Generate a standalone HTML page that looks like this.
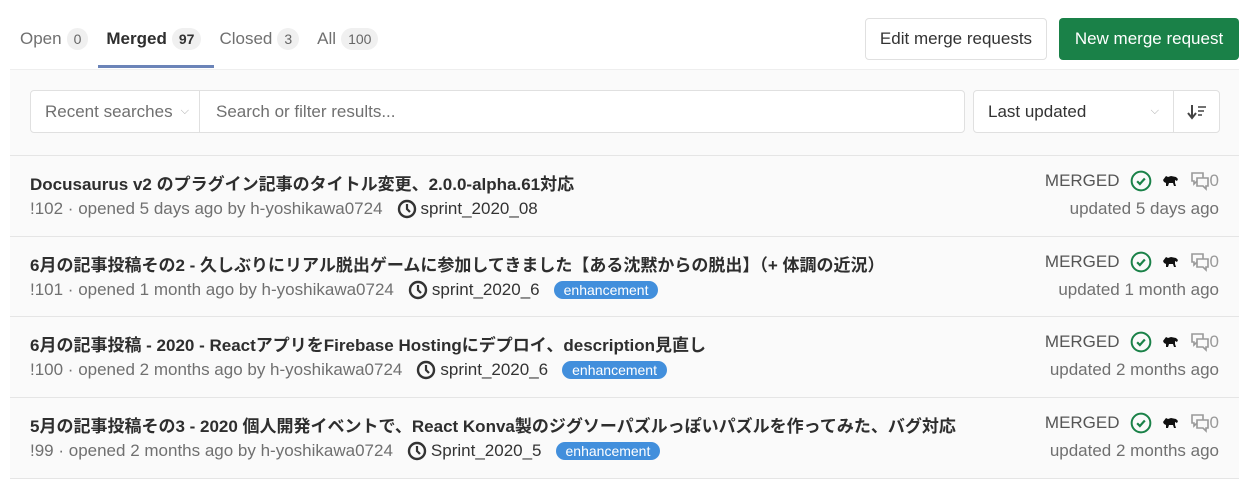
<!DOCTYPE html>
<html><head><meta charset="utf-8"><style>
*{box-sizing:border-box;margin:0;padding:0}
body{width:1244px;height:479px;background:#fff;font-family:"Liberation Sans","Noto Sans CJK JP",sans-serif;color:#2e2e2e;position:relative;overflow:hidden;font-size:17px}
.tabs{position:absolute;left:20px;top:26px;display:flex;font-size:17px;color:#707070}
.tab{margin-right:18px;display:flex;align-items:center;height:26px}
.badge{display:inline-block;background:#f0f0f0;border-radius:12px;font-size:14px;padding:3px 7px;margin-left:5px;color:#666}
.act{color:#2e2e2e;font-weight:bold}
.uline{position:absolute;left:98px;top:65px;width:116px;height:3px;background:#6b84b8}
.btn{position:absolute;top:18px;height:42px;border-radius:4px;font-size:17px;display:flex;align-items:center;justify-content:center}
.gray{position:absolute;left:10px;top:69px;width:1229px;height:87px;background:#fafafa;border-top:1px solid #eee;border-bottom:1px solid #e5e5e5}
.box{position:absolute;background:#fff;border:1px solid #e0e0e0;border-radius:4px;height:43px;display:flex;align-items:center;color:#707070}
.row{position:absolute;left:10px;width:1229px;height:81px;border-bottom:1px solid #e5e5e5;background:#fafafa}
.t{position:absolute;left:20px;top:14px;font-weight:bold;font-size:17px;color:#2e2e2e;white-space:nowrap}
.m{position:absolute;left:20px;top:43px;font-size:17px;color:#707070;white-space:nowrap;display:flex;align-items:center}
.ms{margin-left:14px;color:#333;display:flex;align-items:center}
.ms svg{margin-right:4px}
.lbl{background:#428fdc;color:#fff;border-radius:10px;font-size:14px;padding:1px 10px;margin-left:14px}
.r1{position:absolute;right:20px;top:14px;display:flex;align-items:center;color:#555;font-size:17px}
.r2{position:absolute;right:20px;top:43px;color:#707070;font-size:17px}
</style></head><body>
<div class="tabs">
<div class="tab">Open<span class="badge">0</span></div>
<div class="tab act">Merged<span class="badge" style="font-weight:bold;color:#333">97</span></div>
<div class="tab">Closed<span class="badge">3</span></div>
<div class="tab">All<span class="badge">100</span></div>
</div>
<div class="uline"></div>
<div class="btn" style="left:865px;width:182px;border:1px solid #e0e0e0;color:#333">Edit merge requests</div>
<div class="btn" style="left:1059px;width:180px;background:#1a8148;color:#fff">New merge request</div>
<div class="gray"></div>
<div class="box" style="left:30px;top:90px;width:935px">
<div style="width:169px;height:100%;border-right:1px solid #e0e0e0;display:flex;align-items:center;padding-left:14px">Recent searches <span style="font-size:11px;margin-left:8px;color:#aaa">⌵</span></div>
<div style="padding-left:16px">Search or filter results...</div></div>
<div class="box" style="left:973px;top:90px;width:247px;color:#333">
<div style="width:200px;height:100%;border-right:1px solid #e0e0e0;display:flex;align-items:center;padding-left:14px">Last updated<span style="margin-left:auto;margin-right:14px;font-size:11px;color:#aaa">⌵</span></div>
<div style="flex:1;display:flex;justify-content:center"><svg width="20" height="16" viewBox="0 0 20 16"><path d="M5 1v12M1 9l4 5 4-5" stroke="#444" stroke-width="2" fill="none"/><path d="M11 3h8M11 7h6M11 11h4" stroke="#444" stroke-width="1.6"/></svg></div></div>

<svg width="0" height="0" style="position:absolute"><defs>
<symbol id="ck" viewBox="0 0 20 20"><circle cx="10" cy="10" r="8.5" fill="none" stroke="#1a8148" stroke-width="1.8"/><path d="M6.5 10.2l2.5 2.5 4.5-5" fill="none" stroke="#1a8148" stroke-width="2"/></symbol>
<symbol id="cl" viewBox="0 0 20 20"><circle cx="10" cy="10" r="8" fill="none" stroke="#333" stroke-width="2.4"/><path d="M10 5v5l3 3" fill="none" stroke="#333" stroke-width="2.2"/></symbol>
<symbol id="cm" viewBox="0 0 20 20"><path d="M2 2h11v8H7l-3 3v-3H2z" fill="none" stroke="#999" stroke-width="1.6"/><path d="M7 7h11v8h-2v3l-3-3H7z" fill="#fafafa" stroke="#999" stroke-width="1.6"/></symbol>
<symbol id="dg" viewBox="0 0 20 20"><path d="M3 9l3-4 2 1 3-1 5 1 2 2-1 2-2-1 0 3 1 3h-2l-1-3h-4l-1 3H6l0-3-2-1z" fill="#111"/></symbol>
</defs></svg>

<div class="row" style="top:156px">
<div class="t">Docusaurus v2 のプラグイン記事のタイトル変更、2.0.0-alpha.61対応</div>
<div class="m">!102 · opened 5 days ago by h-yoshikawa0724 <span class="ms"><svg width="20" height="20"><use href="#cl"/></svg>sprint_2020_08</span></div>
<div class="r1">MERGED <svg width="22" height="22" style="margin:0 8px 0 10px"><use href="#ck"/></svg><svg width="20" height="20" style="margin-right:10px"><use href="#dg"/></svg><svg width="20" height="20"><use href="#cm"/></svg><span style="color:#999">0</span></div>
<div class="r2">updated 5 days ago</div></div>

<div class="row" style="top:237px;height:80px">
<div class="t">6月の記事投稿その2 - 久しぶりにリアル脱出ゲームに参加してきました【ある沈黙からの脱出】（+ 体調の近況）</div>
<div class="m">!101 · opened 1 month ago by h-yoshikawa0724 <span class="ms"><svg width="20" height="20"><use href="#cl"/></svg>sprint_2020_6</span><span class="lbl">enhancement</span></div>
<div class="r1">MERGED <svg width="22" height="22" style="margin:0 8px 0 10px"><use href="#ck"/></svg><svg width="20" height="20" style="margin-right:10px"><use href="#dg"/></svg><svg width="20" height="20"><use href="#cm"/></svg><span style="color:#999">0</span></div>
<div class="r2">updated 1 month ago</div></div>

<div class="row" style="top:317px">
<div class="t">6月の記事投稿 - 2020 - ReactアプリをFirebase Hostingにデプロイ、description見直し</div>
<div class="m">!100 · opened 2 months ago by h-yoshikawa0724 <span class="ms"><svg width="20" height="20"><use href="#cl"/></svg>sprint_2020_6</span><span class="lbl">enhancement</span></div>
<div class="r1">MERGED <svg width="22" height="22" style="margin:0 8px 0 10px"><use href="#ck"/></svg><svg width="20" height="20" style="margin-right:10px"><use href="#dg"/></svg><svg width="20" height="20"><use href="#cm"/></svg><span style="color:#999">0</span></div>
<div class="r2">updated 2 months ago</div></div>

<div class="row" style="top:398px">
<div class="t">5月の記事投稿その3 - 2020 個人開発イベントで、React Konva製のジグソーパズルっぽいパズルを作ってみた、バグ対応</div>
<div class="m">!99 · opened 2 months ago by h-yoshikawa0724 <span class="ms"><svg width="20" height="20"><use href="#cl"/></svg>Sprint_2020_5</span><span class="lbl">enhancement</span></div>
<div class="r1">MERGED <svg width="22" height="22" style="margin:0 8px 0 10px"><use href="#ck"/></svg><svg width="20" height="20" style="margin-right:10px"><use href="#dg"/></svg><svg width="20" height="20"><use href="#cm"/></svg><span style="color:#999">0</span></div>
<div class="r2">updated 2 months ago</div></div>
</body></html>
